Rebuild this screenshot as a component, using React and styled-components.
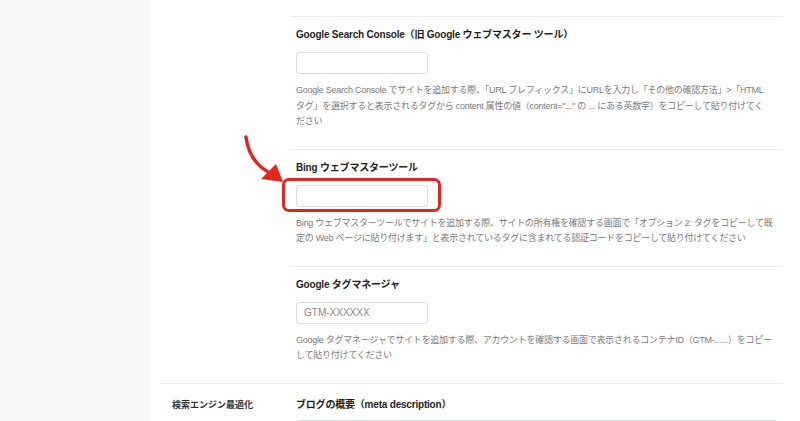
import React from 'react'
import styled, { createGlobalStyle } from 'styled-components'

const GlobalStyle = createGlobalStyle`
  html, body {
    margin: 0;
    padding: 0;
    background: #fff;
  }
  body {
    font-family: "Liberation Sans", "Noto Sans CJK JP", sans-serif;
    color: #1f1f1f;
    -webkit-font-smoothing: antialiased;
  }
`;

const Page = styled.div`
  display: grid;
  grid-template-columns: 150px 1fr;
  height: 100vh;
  overflow: hidden;
`;

const Sidebar = styled.aside`
  background-color: #f6f7f8;
`;

const Main = styled.main`
  padding: 0 17px 0 10px;
`;

const Row = styled.section`
  display: grid;
  grid-template-columns: 130px 1fr;
  border-top: ${p => (p.$bordered ? '1px solid #ececec' : 'none')};
`;

const Label = styled.div`
  padding: 13px 0 0 12px;
  font-size: 9px;
  line-height: 16px;
  font-weight: 600;
  color: #333;
`;

const Content = styled.div`
  padding-top: ${p => p.$offset || 0}px;
`;

const Item = styled.div`
  padding: ${p => (p.$compact ? '13px 4px 0 6px' : '10px 4px 19px 6px')};
  border-top: ${p => (p.$noBorder ? 'none' : '1px solid #ececec')};
`;

const Title = styled.h3`
  margin: 0;
  font-size: 10px;
  line-height: 16px;
  font-weight: bold;
  letter-spacing: -0.2px;
  color: #1f1f1f;
`;

const Field = styled.div`
  position: relative;
  width: ${p => p.$width || 132}px;
  margin-top: ${p => (p.$tight ? 7 : 9)}px;
`;

const Input = styled.input`
  display: block;
  box-sizing: border-box;
  width: 100%;
  height: 22px;
  padding: 0 7px;
  border: 1px solid ${p => p.$tone || '#dedede'};
  border-radius: 3px;
  background: #fff;
  font-family: inherit;
  font-size: 10px;
  color: #333;
  outline: none;
  &::placeholder {
    color: #8a8a8a;
  }
`;

const Highlight = styled.span`
  position: absolute;
  left: -14px;
  right: -13px;
  top: -7px;
  bottom: -5px;
  border: 3px solid #e3261d;
  border-radius: 7px;
  pointer-events: none;
`;

const Arrow = styled.svg`
  position: absolute;
  left: -56px;
  top: -55px;
  width: 50px;
  height: 60px;
  overflow: visible;
`;

const Desc = styled.p`
  margin: 9px 0 0;
  font-size: 9px;
  line-height: 15.5px;
  letter-spacing: -0.25px;
  color: #7b7b7b;
`;

const DescLine = styled.span`
  display: block;
  white-space: nowrap;
`;

const items = [
  {
    title: 'Google Search Console（旧 Google ウェブマスター ツール）',
    desc: [
      'Google Search Console でサイトを追加する際、「URL プレフィックス」にURLを入力し「その他の確認方法」>「HTML',
      'タグ」を選択すると表示されるタグから content 属性の値（content="..." の ... にある英数字）をコピーして貼り付けてく',
      'ださい',
    ],
  },
  {
    title: 'Bing ウェブマスターツール',
    desc: [
      'Bing ウェブマスターツールでサイトを追加する際、サイトの所有権を確認する画面で「オプション 2: タグをコピーして既',
      '定の Web ページに貼り付けます」と表示されているタグに含まれてる認証コードをコピーして貼り付けてください',
    ],
    marked: true,
  },
  {
    title: 'Google タグマネージャ',
    placeholder: 'GTM-XXXXXX',
    desc: [
      'Google タグマネージャでサイトを追加する際、アカウントを確認する画面で表示されるコンテナID（GTM-......）をコピー',
      'して貼り付けてください',
    ],
  },
];

const App = () => {
  return (
    <>
      <GlobalStyle />
      <Page>
        <Sidebar />
        <Main>
          <Row>
            <Label />
            <Content $offset={16}>
              {items.map(item => (
                <Item key={item.title}>
                  <Title>{item.title}</Title>
                  <Field>
                    <Input type="text" placeholder={item.placeholder || ''} />
                    {item.marked && (
                      <>
                        <Highlight />
                        <Arrow viewBox="0 0 50 60">
                          <path d="M6 7 Q9 31 28 42" fill="none" stroke="#e3261d" strokeWidth="3.5" strokeLinecap="round" />
                          <polygon points="21,49 36,34 43,52" fill="#e3261d" />
                        </Arrow>
                      </>
                    )}
                  </Field>
                  <Desc>
                    {item.desc.map(line => (
                      <DescLine key={line}>{line}</DescLine>
                    ))}
                  </Desc>
                </Item>
              ))}
            </Content>
          </Row>
          <Row $bordered>
            <Label>検索エンジン最適化</Label>
            <Content>
              <Item $compact $noBorder>
                <Title>ブログの概要（meta description）</Title>
                <Field $width={482} $tight>
                  <Input as="textarea" $tone="#cfdce2" style={{ height: 60 }} />
                </Field>
              </Item>
            </Content>
          </Row>
        </Main>
      </Page>
    </>
  )
}

export default App
